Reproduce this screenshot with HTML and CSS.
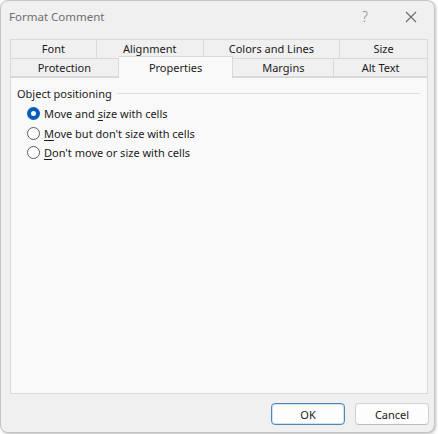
FILE: index.html
```html
<!DOCTYPE html>
<html lang="en">
<head>
  <meta charset="UTF-8" />
  <title>Format Comment</title>
  <link rel="stylesheet" href="styles.css">
</head>
<body>
  <div class="dialog">
    <!-- title bar -->
    <div class="titlebar">
      <span class="title">Format Comment</span>
      <span class="tb-btn help">?</span>
      <span class="tb-btn close">
        <svg width="12" height="12" viewBox="0 0 12 12"><path d="M1 1 L11 11 M11 1 L1 11" stroke="#6a6a6a" stroke-width="1.1" fill="none"/></svg>
      </span>
    </div>

    <!-- tabs -->
    <div class="tabs">
      <div class="tab-row back">
        <div class="tab w-font">Font</div>
        <div class="tab w-align">Alignment</div>
        <div class="tab w-colors">Colors and Lines</div>
        <div class="tab w-size">Size</div>
      </div>
      <div class="tab-row">
        <div class="tab w-prot">Protection</div>
        <div class="tab w-props active">Properties</div>
        <div class="tab w-margins">Margins</div>
        <div class="tab w-alt">Alt Text</div>
      </div>
    </div>

    <div class="panel">
      <div class="group-title">
        <span>Object positioning</span>
        <span class="group-line"></span>
      </div>
      <div class="options">
        <div class="option"><span class="radio checked"></span><span>Move and <u>s</u>ize with cells</span></div>
        <div class="option"><span class="radio"></span><span><u>M</u>ove but don't size with cells</span></div>
        <div class="option"><span class="radio"></span><span><u>D</u>on't move or size with cells</span></div>
      </div>
    </div>

    <div class="footer">
      <button class="btn default">OK</button>
      <button class="btn">Cancel</button>
    </div>
  </div>
</body>
</html>
```

FILE: styles.css
```css
* { margin: 0; padding: 0; box-sizing: border-box; }

body {
  width: 438px;
  height: 434px;
  background: #ffffff;
  font-family: 'Noto Sans', 'Open Sans', sans-serif;
  font-size: 11px;
  color: #1b1b1b;
  overflow: hidden;
}

.dialog {
  width: 435px;
  height: 433px;
  background: #f0f0f0;
  border: 1px solid #c4c4c4;
  border-radius: 8px;
  box-shadow: 1px 1px 3px rgba(0, 0, 0, 0.25);
  display: flex;
  flex-direction: column;
}

/* title bar */
.titlebar {
  height: 31px;
  display: flex;
  align-items: center;
  padding-left: 8px;
}

.title {
  flex: 1;
  color: #6e6e6e;
  font-size: 11.5px;
}

.tb-btn {
  width: 46px;
  height: 31px;
  display: flex;
  align-items: center;
  justify-content: center;
  color: #8a8a8a;
}

.help { font-size: 14px; font-weight: 300; }

/* tabs */
.tabs {
  margin: 7px 0 0 9px;
  width: 418px;
}

.tab-row {
  display: flex;
  height: 19px;
  border-left: 1px solid #d9d9d9;
}

.tab-row:first-child { border-top: 1px solid #d9d9d9; }

.tab {
  height: 19px;
  border-right: 1px solid #d9d9d9;
  border-bottom: 1px solid #d9d9d9;
  display: flex;
  align-items: center;
  justify-content: center;
  padding-top: 1px;
}

.back .tab { padding-top: 0; padding-bottom: 2px; }

.w-font { width: 86px; }
.w-align { width: 107px; }
.w-colors { width: 137px; }
.w-size { width: 88px; }
.w-prot { width: 108px; }
.w-props { width: 115px; }
.w-margins { width: 101px; }
.w-alt { width: 94px; }

.tab.active {
  position: relative;
  z-index: 2;
  height: 22px;
  margin-top: -2px;
  background: #f9f9f9;
  border-bottom: none;
  border-top: 1px solid #d9d9d9;
  padding-bottom: 2px;
}

/* content panel */
.panel {
  margin-left: 9px;
  width: 418px;
  height: 317px;
  background: #f9f9f9;
  border: 1px solid #d9d9d9;
  padding: 7px 7px 0 6px;
}

.group-title {
  display: flex;
  align-items: center;
  gap: 5px;
  height: 16px;
}

.group-line {
  flex: 1;
  height: 1px;
  background: #dedede;
  margin-top: 1px;
}

.options {
  padding: 3px 0 0 10px;
}

.option {
  height: 19.5px;
  display: flex;
  align-items: center;
  gap: 4px;
}

.option u { text-decoration-thickness: 1px; text-underline-offset: 2px; }

.radio {
  width: 13px;
  height: 13px;
  border-radius: 50%;
  border: 1px solid #5d5d5d;
  background: #fdfdfd;
  flex: none;
}

.radio.checked {
  border: 4px solid #005fb8;
  background: #ffffff;
}

/* buttons */
.footer {
  display: flex;
  justify-content: flex-end;
  gap: 10px;
  padding: 9px 5px 0 0;
}

.btn {
  width: 74px;
  height: 22px;
  font-family: inherit;
  font-size: 11px;
  color: #1b1b1b;
  background: #fdfdfd;
  border: 1px solid #d0d0d0;
  border-bottom-color: #bcbcbc;
  border-radius: 4px;
}

.btn.default {
  border: 1px solid #4f86b3;
  box-shadow: inset 0 0 0 1px #cfe2f1;
}
```
